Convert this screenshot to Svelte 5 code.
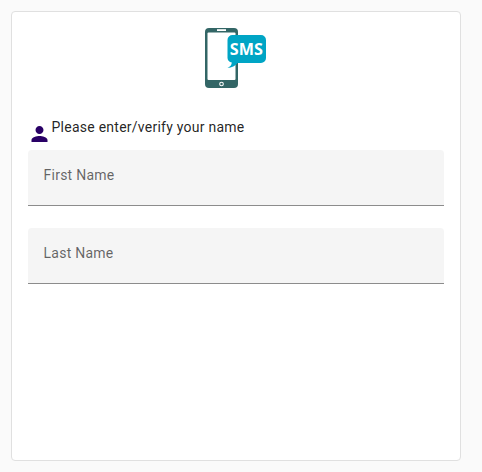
<script>
  const fields = ['First Name', 'Last Name'];
</script>

<main>
  <section class="card">
    <div class="logo">
      <svg width="62" height="61" viewBox="0 0 62 61" role="img" aria-label="SMS">
        <rect width="33" height="60" rx="4" fill="#336666" />
        <rect x="2.5" y="4.5" width="28" height="47.5" rx="1" fill="#fff" />
        <rect x="12" y="1.2" width="9" height="1.8" fill="#fff" />
        <circle cx="16.5" cy="56" r="1.8" fill="none" stroke="#fff" stroke-width="1.1" />
        <path d="M27 7h29a5 5 0 0 1 5 5v18a5 5 0 0 1-5 5H32.500c-2 3-6 4.500-10 5 3-1.500 4-3 4.300-5.500a5 5 0 0 1-4.300-4.500V12a5 5 0 0 1 5-5z" fill="#00a5c5" />
        <text x="41.300" y="27" text-anchor="middle" textLength="33" lengthAdjust="spacingAndGlyphs">SMS</text>
      </svg>
    </div>
    <div class="prompt">
      <svg class="person" width="24" height="24" viewBox="-0.5 0 24 24" aria-hidden="true">
        <path d="M12 12c2.210 0 4-1.790 4-4s-1.790-4-4-4-4 1.790-4 4 1.790 4 4 4zm0 2c-2.670 0-8 1.340-8 4v2h16v-2c0-2.660-5.330-4-8-4z" />
      </svg>
      <span>Please enter/verify your name</span>
    </div>
    <form>
      {#each fields as name}
        <div class="field"><label>{name}<input type="text" aria-label={name} /></label></div>
      {/each}
    </form>
  </section>
</main>

<style>
  :global(body) {
    background: #fafafa;
  }
  main {
    box-sizing: border-box;
    height: 472px;
    padding: 11px;
    font: 14px/20px Roboto, sans-serif;
    letter-spacing: 0.25px;
    overflow: hidden;
  }
  .card {
    box-sizing: border-box;
    width: 450px;
    height: 450px;
    padding: 16px;
    border: 1px solid #e0e0e0;
    border-radius: 4px;
    background: #fff;
  }
  .logo {
    display: flex;
    height: 89px;
    padding-left: 177px;
  }
  .logo text {
    font: bold 16px 'Open Sans', sans-serif;
    letter-spacing: 0;
    fill: #fff;
  }
  .prompt {
    display: flex;
    height: 33px;
    color: rgba(0, 0, 0, 0.87);
  }
  .person {
    flex: none;
    margin: 5px 0.5px 0 -1px;
    fill: #290066;
  }
  form {
    display: flex;
    flex-direction: column;
    gap: 22px;
  }
  .field {
    box-sizing: border-box;
    height: 56px;
    padding: 15px 15.5px;
    border-bottom: 1px solid #8c8c8c;
    border-radius: 4px 4px 0 0;
    background: #f5f5f5;
    color: rgba(0, 0, 0, 0.6);
  }
  label {
    display: flex;
  }
  input {
    flex: 1;
    min-width: 0;
    padding: 0;
    border: 0;
    outline: 0;
    background: transparent;
    font: inherit;
  }
</style>
